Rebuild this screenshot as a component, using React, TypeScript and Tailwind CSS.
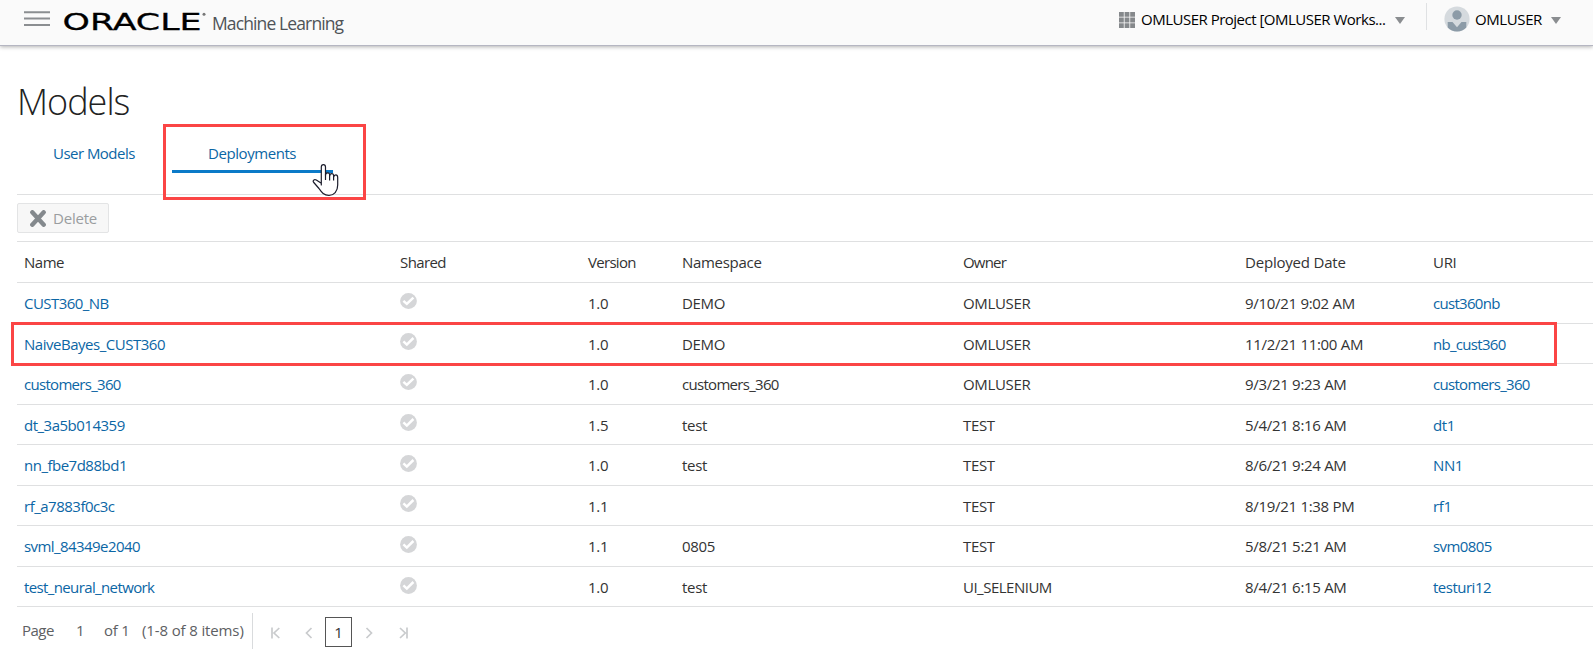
import React from "react";

type Row = {
  name: string;
  nameClass: string;
  version: string;
  namespace: string;
  owner: string;
  date: string;
  uri: string;
  uriClass: string;
  height: string;
  check: string;
};

const rows: Row[] = [
  { name: "CUST360_NB", nameClass: "tracking-[-0.55px]", version: "1.0", namespace: "DEMO", owner: "OMLUSER", date: "9/10/21 9:02 AM", uri: "cust360nb", uriClass: "tracking-[-0.7px]", height: "h-[41px]", check: "mt-[10px] h-[16px]" },
  { name: "NaiveBayes_CUST360", nameClass: "tracking-[-0.48px]", version: "1.0", namespace: "DEMO", owner: "OMLUSER", date: "11/2/21 11:00 AM", uri: "nb_cust360", uriClass: "tracking-[-0.7px]", height: "h-[40px]", check: "mt-[9px] h-[17px]" },
  { name: "customers_360", nameClass: "tracking-[-0.7px]", version: "1.0", namespace: "customers_360", owner: "OMLUSER", date: "9/3/21 9:23 AM", uri: "customers_360", uriClass: "tracking-[-0.7px]", height: "h-[41px]", check: "mt-[10px] h-[16px]" },
  { name: "dt_3a5b014359", nameClass: "tracking-[-0.5px]", version: "1.5", namespace: "test", owner: "TEST", date: "5/4/21 8:16 AM", uri: "dt1", uriClass: "tracking-[-0.4px]", height: "h-[40px]", check: "mt-[9px] h-[17px]" },
  { name: "nn_fbe7d88bd1", nameClass: "tracking-[-0.5px]", version: "1.0", namespace: "test", owner: "TEST", date: "8/6/21 9:24 AM", uri: "NN1", uriClass: "tracking-[-0.4px]", height: "h-[41px]", check: "mt-[10px] h-[17px]" },
  { name: "rf_a7883f0c3c", nameClass: "tracking-[-0.5px]", version: "1.1", namespace: "", owner: "TEST", date: "8/19/21 1:38 PM", uri: "rf1", uriClass: "tracking-[-0.4px]", height: "h-[40px]", check: "mt-[9px] h-[17px]" },
  { name: "svml_84349e2040", nameClass: "tracking-[-0.57px]", version: "1.1", namespace: "0805", owner: "TEST", date: "5/8/21 5:21 AM", uri: "svm0805", uriClass: "tracking-[-0.6px]", height: "h-[41px]", check: "mt-[10px] h-[17px]" },
  { name: "test_neural_network", nameClass: "tracking-[-0.62px]", version: "1.0", namespace: "test", owner: "UI_SELENIUM", date: "8/4/21 6:15 AM", uri: "testuri12", uriClass: "tracking-[-0.5px]", height: "h-[40px]", check: "mt-[10px] h-[17px]" },
];

const columns = "grid grid-cols-[376px_188px_94px_281px_282px_188px_1fr] items-center border-b border-[#dfe0e1] pl-[7px]";

function CheckIcon({ className }: { className: string }) {
  return (
    <svg className={`${className} block w-[17px] self-start`} viewBox="0 0 17 17" preserveAspectRatio="none">
      <circle cx="8.5" cy="8.5" r="8.4" fill="#d5d6d8" />
      <path d="M3.4 8.4 6.8 11.6 13.4 5" fill="none" stroke="#fff" strokeWidth="2.5" />
    </svg>
  );
}

function Caret() {
  return (
    <svg className="block h-[7px] w-[10px]" viewBox="0 0 10 7">
      <path d="M0 0H10L5 7Z" fill="#8a8d90" />
    </svg>
  );
}

function Header() {
  return (
    <header className="flex h-[46px] items-start border-b border-[#b5b6c2] bg-[#fafafa] shadow-[0_1px_4px_rgba(0,0,0,0.3)]">
      <svg className="mt-[11px] ml-6 h-[15px] w-[26px]" viewBox="0 0 26 15">
        <path d="M0 1.3H26M0 7.6H26M0 13.9H26" stroke="#8b8e91" strokeWidth="2" />
      </svg>
      <svg className="mt-[4px] ml-[12px] h-[34px] w-[145px]" viewBox="0 0 145 34">
        <text x="0.5" y="25.6" textLength="139" lengthAdjust="spacingAndGlyphs" fill="#000" stroke="#000" strokeWidth="0.3" fontFamily="DejaVu Sans, sans-serif" fontWeight="400" fontSize="23.8">
          ORACLE
        </text>
        <circle cx="142" cy="10.2" r="1.5" fill="#777" />
      </svg>
      <span className="mt-[10px] ml-[5px] w-[150px] text-[17.5px] leading-[26px] tracking-[-0.88px] whitespace-nowrap text-[#4f5357]">Machine Learning</span>
      <div className="ml-auto flex h-10 items-center text-[15px] whitespace-nowrap text-black">
        <svg className="h-4 w-4" viewBox="0 0 16 16">
          <path d="M0 0h4.8v4.8H0zM5.6 0h4.8v4.8H5.6zM11.2 0H16v4.8h-4.8zM0 5.6h4.8v4.8H0zM5.6 5.6h4.8v4.8H5.6zM11.2 5.6H16v4.8h-4.8zM0 11.2h4.8V16H0zM5.6 11.2h4.8V16H5.6zM11.2 11.2H16V16h-4.8z" fill="#85888b" />
        </svg>
        <span className="mb-[2px] ml-1.5 w-[254px] tracking-[-0.5px]">OMLUSER Project [OMLUSER Works...</span>
        <Caret />
        <span className="mt-[-8px] ml-[21px] h-[27px] w-px bg-[#dfe1e3]" />
        <svg className="mb-[2px] ml-[17px] h-[26px] w-[26px]" viewBox="0 0 26 26">
          <circle cx="13" cy="13" r="12.6" fill="#d5dade" />
          <circle cx="13" cy="9" r="4.7" fill="#8c9ba7" />
          <path d="M3.7 16H8.5L13 21.3 17.5 16H22.3V21.4A12.6 12.6 0 0 1 3.7 21.4Z" fill="#8c9ba7" />
        </svg>
        <span className="mb-[2px] ml-[5px] w-[76px] tracking-[-0.4px]">OMLUSER</span>
        <span className="mr-8">
          <Caret />
        </span>
      </div>
    </header>
  );
}

function Tabs() {
  return (
    <nav className="relative flex h-[73px] border-b border-[#dfe0e1] text-[15px] text-[#0b66a5]">
      <a className="mt-[20px] ml-9 h-[24px] w-[119px] leading-[22px] tracking-[-0.53px]">User Models</a>
      <a className="mt-[20px] h-[31px] w-[161px] border-b-[3px] border-[#0b7ac8] pl-9 leading-[22px] tracking-[-0.43px]">Deployments</a>
      <div className="absolute top-[2px] left-[146px] h-[76px] w-[203px] border-[3px] border-[#fb4545]" />
      <svg className="absolute top-[41px] left-[295px] h-[34px] w-[28px]" viewBox="0 0 28 34">
        <path
          d="M9.3 22V4Q9.3 1.6 11.4 1.6T13.5 4V12.2Q13.5 9.8 15.6 9.8T17.6 12V13Q17.8 10.6 19.7 10.6T21.6 13V14Q22 11.8 23.8 11.8T25.7 14.5V22C25.7 28.5 22 32.3 17 32.3C11.5 32.3 9.5 29 7 25.5L1.8 19.5C0.2 17.6 2.3 16 4.3 17L9.3 20.2Z"
          fill="#fff"
          stroke="#1b1c2b"
          strokeWidth="1.2"
          strokeLinejoin="round"
        />
        <path d="M13.5 11.5V17M17.6 12V17.4M21.6 13V17.4" stroke="#1b1c2b" strokeWidth="1.2" />
      </svg>
    </nav>
  );
}

function Pagination() {
  return (
    <footer className="flex text-[15px] text-[#5d6063]">
      <div className="mt-[11px] flex leading-[24px] whitespace-nowrap tracking-[-0.2px]">
        <span className="ml-[5px] w-[54px] tracking-[-0.5px]">Page</span>
        <span className="w-7">1</span>
        <span className="w-[38px]">of 1</span>
        <span className="w-[110px] tracking-[-0.13px]">(1-8 of 8 items)</span>
      </div>
      <span className="mt-[6px] h-9 w-px bg-[#d9dbdd]" />
      <svg className="mt-[20px] ml-[18px] h-[12px] w-[10px]" viewBox="0 0 10 12">
        <path d="M1 .5V11.5M8.3 1 3 6 8.3 11" fill="none" stroke="#c9cbcd" strokeWidth="1.7" />
      </svg>
      <svg className="mt-[20px] ml-[24px] h-[12px] w-[8px]" viewBox="0 0 8 12">
        <path d="M6.5 1 1.5 6 6.5 11" fill="none" stroke="#c9cbcd" strokeWidth="1.7" />
      </svg>
      <span className="mt-[10px] ml-[12px] h-[30px] w-[27px] border border-[#555] text-center leading-[28px] text-[#333]">1</span>
      <svg className="mt-[20px] ml-[13px] h-[12px] w-[8px]" viewBox="0 0 8 12">
        <path d="M1.5 1 6.5 6 1.5 11" fill="none" stroke="#c9cbcd" strokeWidth="1.7" />
      </svg>
      <svg className="mt-[20px] ml-[26px] h-[12px] w-[10px]" viewBox="0 0 10 12">
        <path d="M8 .5V11.5M1 1 6.3 6 1 11" fill="none" stroke="#c9cbcd" strokeWidth="1.7" />
      </svg>
    </footer>
  );
}

export default function App() {
  return (
    <div className="h-[660px] w-full overflow-hidden bg-white font-['Open_Sans','Noto_Sans',sans-serif]">
      <Header />
      <main className="pl-[17px]">
        <h1 className="h-[76px] pt-[32px] text-[36px] leading-[48px] font-light tracking-[-1px] text-[#222]">Models</h1>
        <Tabs />
        <div className="h-[47px] border-b border-[#dfe0e1] pt-2">
          <button className="flex h-[30px] w-[92px] items-center rounded-[2px] border border-[#e3e4e5] bg-[#f7f7f7] pl-3 text-[15px] text-[#9a9da0]">
            <svg className="h-[17px] w-[16px]" viewBox="0 0 16 17">
              <path d="M2.3 2.3 13.7 14.7M13.7 2.3 2.3 14.7" stroke="#84898d" strokeWidth="4.4" strokeLinecap="round" />
            </svg>
            <span className="ml-[7px] tracking-[-0.2px]">Delete</span>
          </button>
        </div>
        <div className="relative text-[15px] tracking-[-0.3px] whitespace-nowrap text-[#333]">
          <div className={`${columns} h-[41px]`}>
            <span className="tracking-[-0.5px]">Name</span>
            <span className="tracking-[-0.6px]">Shared</span>
            <span className="tracking-[-0.7px]">Version</span>
            <span>Namespace</span>
            <span className="tracking-[-0.8px]">Owner</span>
            <span className="tracking-[-0.2px]">Deployed Date</span>
            <span>URI</span>
          </div>
          {rows.map((r) => (
            <div key={r.name} className={`${columns} ${r.height}`}>
              <a className={`mt-px text-[#0b66a5] ${r.nameClass}`}>{r.name}</a>
              <CheckIcon className={r.check} />
              <span className="mt-px">{r.version}</span>
              <span className={`mt-px ${r.namespace === "customers_360" ? "tracking-[-0.7px]" : ""}`}>{r.namespace}</span>
              <span className={`mt-px ${r.owner === "UI_SELENIUM" ? "tracking-[-0.5px]" : "tracking-[-0.35px]"}`}>{r.owner}</span>
              <span className="mt-px">{r.date}</span>
              <a className={`mt-px text-[#0b66a5] ${r.uriClass}`}>{r.uri}</a>
            </div>
          ))}
          <div className="absolute top-[80px] left-[-6px] h-[44px] w-[1546px] border-[3px] border-[#fb4545]" />
        </div>
        <Pagination />
      </main>
    </div>
  );
}
